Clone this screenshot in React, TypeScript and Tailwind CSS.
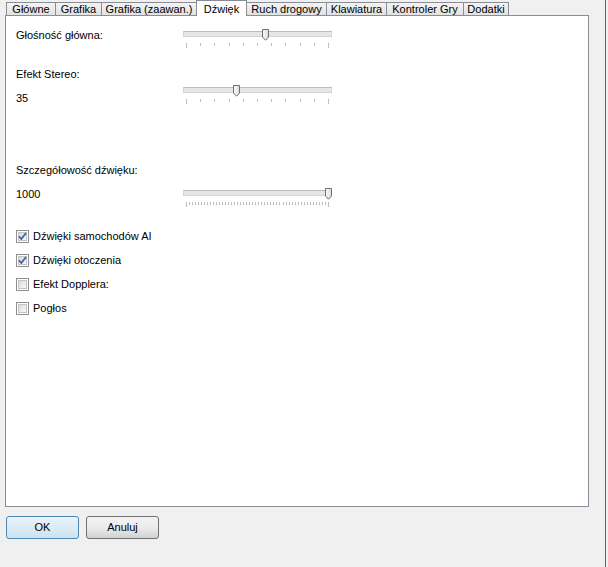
import React from 'react';

// Win7-style "Dźwięk" settings page

const tabs = [
  { label: 'Główne', w: 'w-[50px]' },
  { label: 'Grafika', w: 'w-[47px]' },
  { label: 'Grafika (zaawan.)', w: 'w-[96px]' },
  { label: 'Dźwięk', w: 'w-[51px]', active: true },
  { label: 'Ruch drogowy', w: 'w-[81px]' },
  { label: 'Klawiatura', w: 'w-[61px]' },
  { label: 'Kontroler Gry', w: 'w-[78px]' },
  { label: 'Dodatki', w: 'w-[46px]' },
];

const checks = [
  { label: 'Dźwięki samochodów AI', checked: true },
  { label: 'Dźwięki otoczenia', checked: true },
  { label: 'Efekt Dopplera:', checked: false },
  { label: 'Pogłos', checked: false },
];

const Slider: React.FC<{ value: number; ticks: number }> = ({ value, ticks }) => (
  <div className="relative w-[149px] h-[20px] shrink-0">
    <div className="absolute left-0 top-[2px] w-[149px] h-[6px] bg-[#e6e6e6] border border-[#d4d4d4] border-t-[#bcbcbc]" />
    <div className="absolute left-[3px] top-[14px] w-[143px] flex justify-between items-start">
      {Array.from({ length: ticks }).map((_, i) => (
        <div
          key={i}
          className={`w-px bg-[#bdbdbd] ${i === 0 || i === ticks - 1 ? 'h-[5px]' : 'h-[3px]'}`}
        />
      ))}
    </div>
    <svg className="absolute top-0" style={{ left: Math.round(value * 142) }} width="7" height="12" viewBox="0 0 7 12">
      <defs>
        <linearGradient id="thumbFill" x1="0" y1="0" x2="1" y2="0">
          <stop offset="0" stopColor="#fbfbfb" />
          <stop offset="1" stopColor="#dcdcdc" />
        </linearGradient>
      </defs>
      <path d="M0.5 0.5 H6.5 V8 L3.5 11.2 L0.5 8 Z" fill="url(#thumbFill)" stroke="#6f6f6f" strokeWidth="1" />
    </svg>
  </div>
);

const CheckBox: React.FC<{ checked: boolean }> = ({ checked }) => (
  <svg width="13" height="13" viewBox="0 0 13 13" className="shrink-0">
    <defs>
      <linearGradient id="cbFill" x1="0" y1="0" x2="1" y2="1">
        <stop offset="0" stopColor="#d8d8d8" />
        <stop offset="1" stopColor="#fbfbfb" />
      </linearGradient>
    </defs>
    <rect x="0.5" y="0.5" width="12" height="12" fill="#fff" stroke="#8f8f8f" />
    <rect x="2.5" y="2.5" width="8" height="8" fill="url(#cbFill)" stroke="#c4c4c4" />
    {checked && (
      <path d="M3 6.4 L5.3 9 L10 3" fill="none" stroke="#43619f" strokeWidth="1.8" strokeLinejoin="round" />
    )}
  </svg>
);

export default function App() {
  return (
    <div className="w-[608px] h-[567px] bg-[#f0f0f0] flex font-['Liberation_Sans',Arial,sans-serif] text-[11px] text-black overflow-hidden">
      <div className="w-[605px] pl-[5px] flex flex-col">
        {/* tabs */}
        <div className="h-[15px] ml-[1px] flex items-end">
          {tabs.map((t, i) =>
            t.active ? (
              <div
                key={t.label}
                className={`${t.w} h-[16px] -mb-px ${i > 0 ? '-ml-px' : ''} relative z-10 bg-white border border-b-0 border-[#898c95] flex items-center justify-center leading-[14px]`}
              >
                {t.label}
              </div>
            ) : (
              <div
                key={t.label}
                className={`${t.w} h-[13px] ${i > 0 ? '-ml-px' : ''} bg-linear-to-b from-[#f4f4f4] to-[#e2e2e2] border border-b-0 border-[#898c95] flex items-center justify-center leading-[12px]`}
              >
                {t.label}
              </div>
            )
          )}
        </div>

        {/* panel */}
        <div className="w-[584px] h-[492px] bg-white border border-[#898c95] pl-[10px] pt-[12px] flex flex-col leading-[14px]">
          <div className="flex items-start">
            <div className="w-[167px]">Głośność główna:</div>
            <div className="mt-[1px]">
              <Slider value={0.556} ticks={11} />
            </div>
          </div>

          <div className="mt-[18px]">Efekt Stereo:</div>
          <div className="mt-[4px] flex items-start">
            <div className="w-[167px] mt-[6px]">35</div>
            <Slider value={0.35} ticks={11} />
          </div>

          <div className="mt-[58px]">Szczegółowość dźwięku:</div>
          <div className="mt-[10px] flex items-start">
            <div className="w-[167px]">1000</div>
            <div className="mt-[1px]">
              <Slider value={1} ticks={48} />
            </div>
          </div>

          <div className="mt-[16px] flex flex-col">
            {checks.map((c) => (
              <div key={c.label} className="h-[24px] flex items-center gap-[4px]">
                <CheckBox checked={c.checked} />
                <span>{c.label}</span>
              </div>
            ))}
          </div>
        </div>

        {/* buttons */}
        <div className="mt-[9px] ml-[1px] flex gap-[7px]">
          <button className="w-[73px] h-[23px] rounded-[3px] border border-[#4a88b5] bg-linear-to-b from-[#eaf4f9] to-[#cde3ee] flex items-center justify-center">
            OK
          </button>
          <button className="w-[73px] h-[23px] rounded-[3px] border border-[#707070] bg-linear-to-b from-[#f3f3f3] via-[#ebebeb] to-[#d2d2d2] flex items-center justify-center">
            Anuluj
          </button>
        </div>
      </div>
      <div className="w-px h-full bg-[#6d6244]" />
      <div className="flex-1 h-full bg-[#f0f0f0]" />
    </div>
  );
}
